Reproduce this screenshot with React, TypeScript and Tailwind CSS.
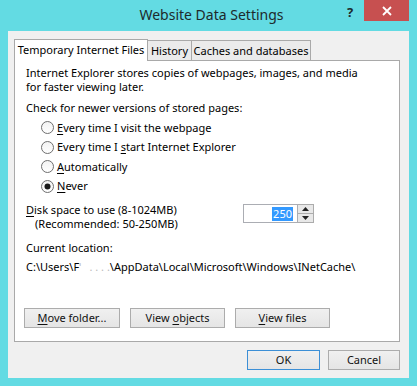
import React from "react";

const font = { fontFamily: '"Noto Sans", "Open Sans", sans-serif' };

function Radio({ checked }: { checked?: boolean }) {
  return (
    <svg width="13" height="13" viewBox="0 0 13 13" className="shrink-0">
      <defs>
        <linearGradient id="rg" x1="0" y1="0" x2="0" y2="1">
          <stop offset="0" stopColor="#f2f2f2" />
          <stop offset="1" stopColor="#ffffff" />
        </linearGradient>
      </defs>
      <circle cx="6.5" cy="6.5" r="6" fill="url(#rg)" stroke="#6e6e6e" strokeWidth="1" />
      {checked && <circle cx="6.5" cy="6.5" r="3" fill="#1a1a1a" />}
    </svg>
  );
}

function U({ children }: { children: React.ReactNode }) {
  return <span className="underline underline-offset-2 decoration-1">{children}</span>;
}

function Btn({
  children,
  w,
  def,
}: {
  children: React.ReactNode;
  w: string;
  def?: boolean;
}) {
  return (
    <div
      className={`${w} h-[20px] flex items-center justify-center text-[11px] leading-[14px] text-[#111] bg-gradient-to-b from-[#f0f0f0] to-[#e5e5e5] border ${
        def ? "border-[#3c8fd6]" : "border-[#acacac]"
      }`}
    >
      {children}
    </div>
  );
}

export default function App() {
  return (
    <div
      className="w-[417px] h-[386px] bg-[#63dbe3] flex flex-col overflow-hidden whitespace-nowrap"
      style={font}
    >
      {/* Title bar */}
      <div className="h-[31px] shrink-0 flex relative">
        <div className="flex-1 flex items-center justify-center pl-[6px] pb-[1px] text-[14px] leading-[18px] text-[#1d2a2c]">
          Website Data Settings
        </div>
        <div className="absolute right-[8px] top-0 flex items-start">
          <div className="w-[20px] h-[24px] flex items-center justify-center text-[13px] leading-[16px] font-bold text-[#1d2a2c] mr-[4px]">
            ?
          </div>
          <div className="w-[45px] h-[21px] bg-[#c75050] flex items-center justify-center">
            <svg width="10" height="10" viewBox="0 0 10 10">
              <path d="M1 1 L9 9 M9 1 L1 9" stroke="#ffffff" strokeWidth="1.8" />
            </svg>
          </div>
        </div>
      </div>

      {/* Client area */}
      <div className="mx-[8px] mb-[8px] flex-1 bg-[#f0f0f0] flex flex-col text-[11px] leading-[14px] text-[#000]">
        {/* Tabs */}
        <div className="h-[29px] flex items-end pl-[6px]">
          <div className="w-[134px] h-[22px] bg-white border border-b-0 border-[#a9a9a9] flex items-center justify-center relative z-10 -mb-[1px] pb-[1px]">
            Temporary Internet Files
          </div>
          <div className="w-[44px] h-[20px] bg-[#ebebeb] border border-l-0 border-b-0 border-[#a9a9a9] flex items-center justify-center">
            History
          </div>
          <div className="w-[119px] h-[20px] bg-[#ebebeb] border border-l-0 border-b-0 border-[#a9a9a9] flex items-center justify-center">
            Caches and databases
          </div>
        </div>

        {/* Panel */}
        <div className="ml-[6px] mr-[9px] h-[282px] bg-white border border-[#a9a9a9] pl-[11px] pr-[8px] flex flex-col">
          <div className="mt-[5px] h-[14px] flex items-center">
            Internet Explorer stores copies of webpages, images, and media
          </div>
          <div className="h-[14px] flex items-center">for faster viewing later.</div>
          <div className="mt-[7px] h-[14px] flex items-center">
            Check for newer versions of stored pages:
          </div>
          <div className="mt-[3px] flex flex-col pl-[15px]">
            <div className="h-[19.5px] flex items-center gap-[3px]">
              <Radio />
              <span>
                <U>E</U>very time I visit the webpage
              </span>
            </div>
            <div className="h-[19.5px] flex items-center gap-[3px]">
              <Radio />
              <span>
                Every time I <U>s</U>tart Internet Explorer
              </span>
            </div>
            <div className="h-[19.5px] flex items-center gap-[3px]">
              <Radio />
              <span>
                <U>A</U>utomatically
              </span>
            </div>
            <div className="h-[19.5px] flex items-center gap-[3px]">
              <Radio checked />
              <span>
                <U>N</U>ever
              </span>
            </div>
          </div>

          <div className="mt-[7px] flex items-start">
            <div className="w-[217px] flex flex-col">
              <div className="h-[14px] flex items-center">
                <span>
                  <U>D</U>isk space to use (8-1024MB)
                </span>
              </div>
              <div className="h-[14px] flex items-center pl-[9px]">
                (Recommended: 50-250MB)
              </div>
            </div>
            <div className="flex mt-[1px]">
              <div className="w-[55px] h-[19px] border border-[#abadb3] bg-white flex items-center justify-end pr-[4px]">
                <span className="bg-[#3399ff] text-white px-[1px] leading-[14px]">250</span>
              </div>
              <div className="w-[16px] h-[19px] flex flex-col border border-l-0 border-[#acacac]">
                <div className="flex-1 bg-[#e8e8e8] border-b border-[#acacac] flex items-center justify-center">
                  <svg width="7" height="4" viewBox="0 0 7 4">
                    <path d="M0 4 L3.5 0 L7 4 Z" fill="#222" />
                  </svg>
                </div>
                <div className="flex-1 bg-[#e8e8e8] flex items-center justify-center">
                  <svg width="7" height="4" viewBox="0 0 7 4">
                    <path d="M0 0 L3.5 4 L7 0 Z" fill="#222" />
                  </svg>
                </div>
              </div>
            </div>
          </div>

          <div className="mt-[10px] h-[14px] flex items-center">Current location:</div>
          <div className="mt-[5px] h-[14px] flex items-center">
            C:\Users\F<span className="text-[#bbbbbb]">ˈ&nbsp;&nbsp;&nbsp;.&nbsp;.&nbsp;.&nbsp;.</span>\AppData\Local\Microsoft\Windows\INetCache\
          </div>

          <div className="mt-[34px] -ml-[2px] flex gap-[10px]">
            <Btn w="w-[96px]">
              <span>
                <U>M</U>ove folder...
              </span>
            </Btn>
            <Btn w="w-[95px]">
              <span>
                View <U>o</U>bjects
              </span>
            </Btn>
            <Btn w="w-[95px]">
              <span>
                <U>V</U>iew files
              </span>
            </Btn>
          </div>
        </div>

        {/* OK / Cancel */}
        <div className="mt-[8px] mr-[9px] flex justify-end gap-[8px]">
          <Btn w="w-[73px]" def>
            OK
          </Btn>
          <Btn w="w-[72px]">Cancel</Btn>
        </div>
      </div>
    </div>
  );
}
